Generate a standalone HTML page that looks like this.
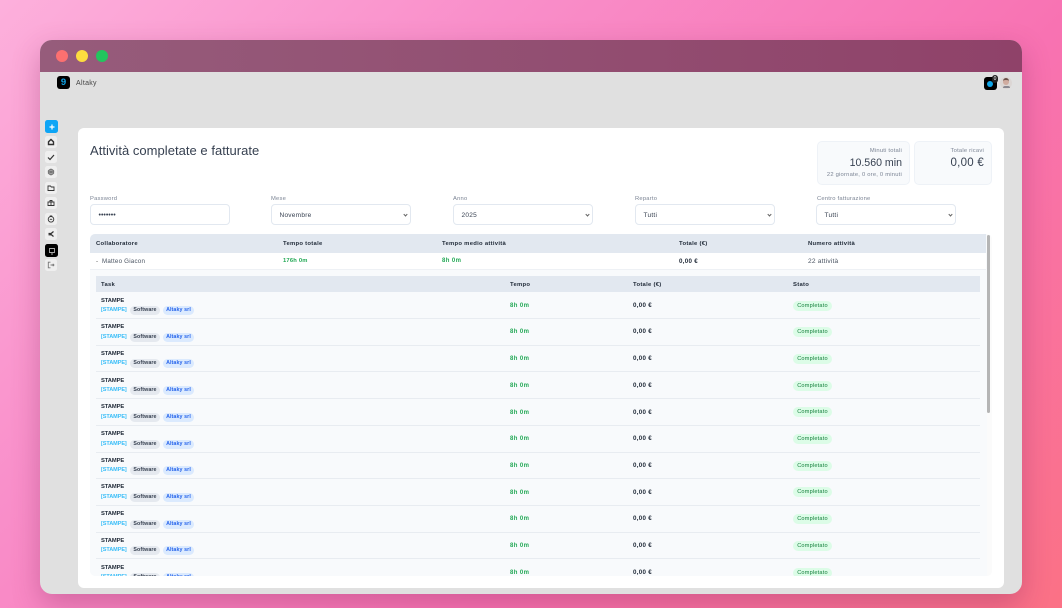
<!DOCTYPE html>
<html><head><meta charset="utf-8"><style>
*{box-sizing:border-box;margin:0;padding:0}
html,body{width:1062px;height:608px;overflow:hidden}
body{position:relative;background:linear-gradient(135deg,#fdb0dc 0%,#f98fca 30%,#f872b2 65%,#fb7185 100%);font-family:"Liberation Sans",sans-serif;color:#374151}
div,span{position:absolute;white-space:nowrap}
.win{left:40px;top:40px;width:982px;height:554px;border-radius:12px;background:#e0e0e0;overflow:hidden;box-shadow:0 10px 28px rgba(120,30,80,.3)}
.bar{left:0;top:0;width:982px;height:32px;background:linear-gradient(90deg,#965c7b,#8f4269)}
.dot{top:50px;width:12px;height:12px;border-radius:50%}
.sb{left:45px;width:12px;height:12px;border-radius:2.5px;background:#efefef}
.sb svg{position:absolute;left:2px;top:2px;width:8px;height:8px;fill:none;stroke:#333;stroke-width:1.2}
.card{left:78px;top:128px;width:926px;height:460px;background:#fff;border-radius:6px}
.stat{top:141px;height:44px;background:#f8fafc;border:1px solid #eef2f7;border-radius:5px}
.lb{font-size:5.8px;color:#7b8494;letter-spacing:.22px;top:195.5px}
.in{top:204px;width:140px;height:21px;background:#fff;border:1px solid #e2e8f0;border-radius:4px;font-size:6.5px;color:#374151;line-height:21px;padding-left:7.5px;letter-spacing:.25px}
.in i{position:absolute;right:3px;top:8px;width:3px;height:3px;border-right:1px solid #666;border-bottom:1px solid #666;transform:rotate(45deg)}
.th{font-size:5.9px;font-weight:bold;color:#1f2937;letter-spacing:.28px}
.hd{background:#e2e8f0}
.row{left:96px;width:884px;height:27px;border-bottom:1px solid #e8ecf1}
.t{left:5px;top:5.5px;font-size:5.8px;font-weight:bold;color:#1f2937;letter-spacing:-.1px}
.c{left:5px;top:15px;font-size:5.5px;font-weight:bold;color:#38bdf8;letter-spacing:-.06px}
.p1{left:34px;top:14px;width:30px;height:9px;border-radius:5px;background:#e5e9ef;font-size:5.3px;font-weight:bold;color:#374151;line-height:9px;text-align:center;letter-spacing:.1px}
.p2{left:67px;top:14px;width:31px;height:9px;border-radius:5px;background:#dbeafe;font-size:5.3px;font-weight:bold;color:#2563eb;line-height:9px;text-align:center;letter-spacing:.1px}
.h{left:414px;top:10.800px;font-size:6px;font-weight:bold;color:#22a855;letter-spacing:.4px}
.e{left:537px;top:9.800px;font-size:6.200px;font-weight:bold;color:#1f2937;letter-spacing:.3px}
.s{left:697px;top:8.500px;width:39px;height:10px;border-radius:5px;background:#dcfce7;font-size:5.6px;color:#15803d;line-height:10px;text-align:center;letter-spacing:.2px}
</style></head><body>
<div class="win"><div class="bar"></div></div>
<div class="dot" style="left:56px;background:#fb7070"></div>
<div class="dot" style="left:76px;background:#fddc3f"></div>
<div class="dot" style="left:96px;background:#22c55e"></div>

<div style="left:57px;top:76px;width:13px;height:13px;border-radius:3px;background:#000;color:#0ea5e9;font-size:9.500px;font-weight:bold;line-height:13px;text-align:center">9</div>
<div style="left:76px;top:80px;font-size:7px;color:#444;letter-spacing:.3px">Altaky</div>
<div style="left:984px;top:77px;width:13px;height:13px;border-radius:3px;background:#000"></div>
<div style="left:987px;top:81px;width:6px;height:6px;border-radius:50%;background:#0ea5e9"></div>
<div style="left:992px;top:75px;width:6px;height:8px;border-radius:3px;background:#222;color:#fff;font-size:5px;line-height:8px;text-align:center">0</div>
<div style="left:1000px;top:77px;width:12px;height:12px;border-radius:50%;background:#dcd6d4"></div>
<div style="left:1003px;top:78px;width:6px;height:7px;border-radius:3px;background:#d0aca0;border-top:2px solid #6a5048"></div>
<div style="left:1002.500px;top:85.500px;width:7px;height:2.500px;background:#8a8890;border-radius:2px 2px 0 0"></div>

<div class="sb" style="top:120px;background:#0ea5f5;width:13px;height:13px"><svg viewBox="0 0 8 8" style="stroke:#fff;left:2.5px;top:2.5px"><path d="M4 1.5v5M1.5 4h5"/></svg></div>
<div class="sb" style="top:136px"><svg viewBox="0 0 8 8"><path d="M1.5 6.5V3.8L4 1.5l2.5 2.3v2.7z" fill="none" stroke-width="1.4"/></svg></div>
<div class="sb" style="top:151px"><svg viewBox="0 0 8 8"><path d="M1 4.5l2 2L7 2"/></svg></div>
<div class="sb" style="top:166px"><svg viewBox="0 0 8 8" style="stroke:#777"><circle cx="4" cy="4" r="2.6"/><path d="M1 2.5l6 3M1 5.500l6-3M4 .8v6.400"/></svg></div>
<div class="sb" style="top:182px"><svg viewBox="0 0 8 8" style="stroke-width:.9"><path d="M1 2h2.500l.8 1H7v3.500H1z"/></svg></div>
<div class="sb" style="top:197px"><svg viewBox="0 0 8 8" style="stroke-width:.9"><path d="M1 3h6v3.500H1zM3 3V1.500h2V3M4 3v3.500"/></svg></div>
<div class="sb" style="top:213px"><svg viewBox="0 0 8 8" style="stroke-width:.9"><circle cx="4" cy="4.300" r="2.800"/><path d="M2.800 1h2.400M2.800 4.300h2.400"/></svg></div>
<div class="sb" style="top:228px"><svg viewBox="0 0 8 8"><path d="M6.500 1.500L3.500 4l3 2.500M1.500 3.500h3M1.500 4.800h3"/></svg></div>
<div class="sb" style="top:244px;background:#000;width:13px;height:13px"><svg viewBox="0 0 8 8" style="stroke:#aaa;left:2.500px;top:2.500px;stroke-width:.9"><path d="M1.500 1.500h5v4h-5zM3 7h2"/></svg></div>
<div class="sb" style="top:259px"><svg viewBox="0 0 8 8" style="stroke:#777;stroke-width:.9"><path d="M3.500 1.200H1.300v5.600h2.200M3.500 4H7M5.800 2.800L7 4 5.800 5.200"/></svg></div>

<div class="card"></div>
<div style="left:90px;top:142.500px;font-size:13px;color:#374151;letter-spacing:.03px">Attività completate e fatturate</div>

<div class="stat" style="left:817px;width:93px"></div>
<div style="right:160px;top:148px;font-size:5.8px;color:#7b8494;letter-spacing:.22px">Minuti totali</div>
<div style="right:160px;top:157px;font-size:10.600px;color:#374151">10.560 min</div>
<div style="right:160px;top:171.500px;font-size:5.8px;color:#7b8494;letter-spacing:.22px">22 giornate, 0 ore, 0 minuti</div>
<div class="stat" style="left:914px;width:78px"></div>
<div style="right:78px;top:148px;font-size:5.8px;color:#7b8494;letter-spacing:.22px">Totale ricavi</div>
<div style="right:78px;top:157px;font-size:11.500px;color:#374151;letter-spacing:.25px">0,00 €</div>

<div class="lb" style="left:90px">Password</div>
<div class="in" style="left:90px;font-size:7px;letter-spacing:0">•••••••</div>
<div class="lb" style="left:271px">Mese</div>
<div class="in" style="left:271px">Novembre<i></i></div>
<div class="lb" style="left:453px">Anno</div>
<div class="in" style="left:453px">2025<i></i></div>
<div class="lb" style="left:635px">Reparto</div>
<div class="in" style="left:635px">Tutti<i></i></div>
<div class="lb" style="left:817px">Centro fatturazione</div>
<div class="in" style="left:816px">Tutti<i></i></div>

<div style="left:90px;top:234px;width:902px;height:342px;border-radius:5px;overflow:hidden;background:#f8fafc">
<div style="left:897px;top:0;width:5px;height:342px;background:#fbfbfb"></div>
<div style="left:897px;top:1px;width:3px;height:178px;background:#b5b5b5;border-radius:1.500px"></div>
<div class="hd" style="left:0;top:0;width:896px;height:19px"></div>
<div style="left:0;top:19px;width:896px;height:17px;background:#fff;border-bottom:1px solid #eef1f5"></div>
<div class="th" style="left:6px;top:7px">Collaboratore</div>
<div class="th" style="left:193px;top:7px">Tempo totale</div>
<div class="th" style="left:352px;top:7px">Tempo medio attività</div>
<div class="th" style="left:589px;top:7px">Totale (€)</div>
<div class="th" style="left:718px;top:7px">Numero attività</div>
<div style="left:6px;top:24px;font-size:6.2px;color:#555">-</div>
<div style="left:12px;top:24px;font-size:6.2px;color:#4b5563;letter-spacing:.22px">Matteo Giacon</div>
<div style="left:193px;top:24px;font-size:5.8px;font-weight:bold;color:#22a855;letter-spacing:.2px">176h 0m</div>
<div style="left:352px;top:24px;font-size:6px;font-weight:bold;color:#22a855;letter-spacing:.4px">8h 0m</div>
<div style="left:589px;top:24px;font-size:6.200px;font-weight:bold;color:#1f2937;letter-spacing:.3px">0,00 €</div>
<div style="left:718px;top:24px;font-size:6.600px;color:#4b5563;letter-spacing:.2px">22 attività</div>
</div>

<div style="left:90px;top:234px;width:896px;height:342px;overflow:hidden;border-radius:5px">
<div class="hd" style="left:6px;top:42px;width:884px;height:16px"></div>
<div class="th" style="left:11px;top:46px;margin-top:1.500px">Task</div>
<div class="th" style="left:420px;top:46px;margin-top:1.500px">Tempo</div>
<div class="th" style="left:543px;top:46px;margin-top:1.500px">Totale (€)</div>
<div class="th" style="left:703px;top:46px;margin-top:1.500px">Stato</div>
</div>

<div style="left:0;top:292px;width:1062px;height:284px;overflow:hidden">
<div class="row" style="top:0"><div class="t">STAMPE</div><div class="c">[STAMPE]</div><div class="p1">Software</div><div class="p2">Altaky srl</div><div class="h">8h 0m</div><div class="e">0,00 €</div><div class="s">Completato</div></div>
<div class="row" style="top:26.700px"><div class="t">STAMPE</div><div class="c">[STAMPE]</div><div class="p1">Software</div><div class="p2">Altaky srl</div><div class="h">8h 0m</div><div class="e">0,00 €</div><div class="s">Completato</div></div>
<div class="row" style="top:53.400px"><div class="t">STAMPE</div><div class="c">[STAMPE]</div><div class="p1">Software</div><div class="p2">Altaky srl</div><div class="h">8h 0m</div><div class="e">0,00 €</div><div class="s">Completato</div></div>
<div class="row" style="top:80.100px"><div class="t">STAMPE</div><div class="c">[STAMPE]</div><div class="p1">Software</div><div class="p2">Altaky srl</div><div class="h">8h 0m</div><div class="e">0,00 €</div><div class="s">Completato</div></div>
<div class="row" style="top:106.800px"><div class="t">STAMPE</div><div class="c">[STAMPE]</div><div class="p1">Software</div><div class="p2">Altaky srl</div><div class="h">8h 0m</div><div class="e">0,00 €</div><div class="s">Completato</div></div>
<div class="row" style="top:133.500px"><div class="t">STAMPE</div><div class="c">[STAMPE]</div><div class="p1">Software</div><div class="p2">Altaky srl</div><div class="h">8h 0m</div><div class="e">0,00 €</div><div class="s">Completato</div></div>
<div class="row" style="top:160.200px"><div class="t">STAMPE</div><div class="c">[STAMPE]</div><div class="p1">Software</div><div class="p2">Altaky srl</div><div class="h">8h 0m</div><div class="e">0,00 €</div><div class="s">Completato</div></div>
<div class="row" style="top:186.900px"><div class="t">STAMPE</div><div class="c">[STAMPE]</div><div class="p1">Software</div><div class="p2">Altaky srl</div><div class="h">8h 0m</div><div class="e">0,00 €</div><div class="s">Completato</div></div>
<div class="row" style="top:213.600px"><div class="t">STAMPE</div><div class="c">[STAMPE]</div><div class="p1">Software</div><div class="p2">Altaky srl</div><div class="h">8h 0m</div><div class="e">0,00 €</div><div class="s">Completato</div></div>
<div class="row" style="top:240.300px"><div class="t">STAMPE</div><div class="c">[STAMPE]</div><div class="p1">Software</div><div class="p2">Altaky srl</div><div class="h">8h 0m</div><div class="e">0,00 €</div><div class="s">Completato</div></div>
<div class="row" style="top:267px"><div class="t">STAMPE</div><div class="c">[STAMPE]</div><div class="p1">Software</div><div class="p2">Altaky srl</div><div class="h">8h 0m</div><div class="e">0,00 €</div><div class="s">Completato</div></div>
</div>
</body></html>
